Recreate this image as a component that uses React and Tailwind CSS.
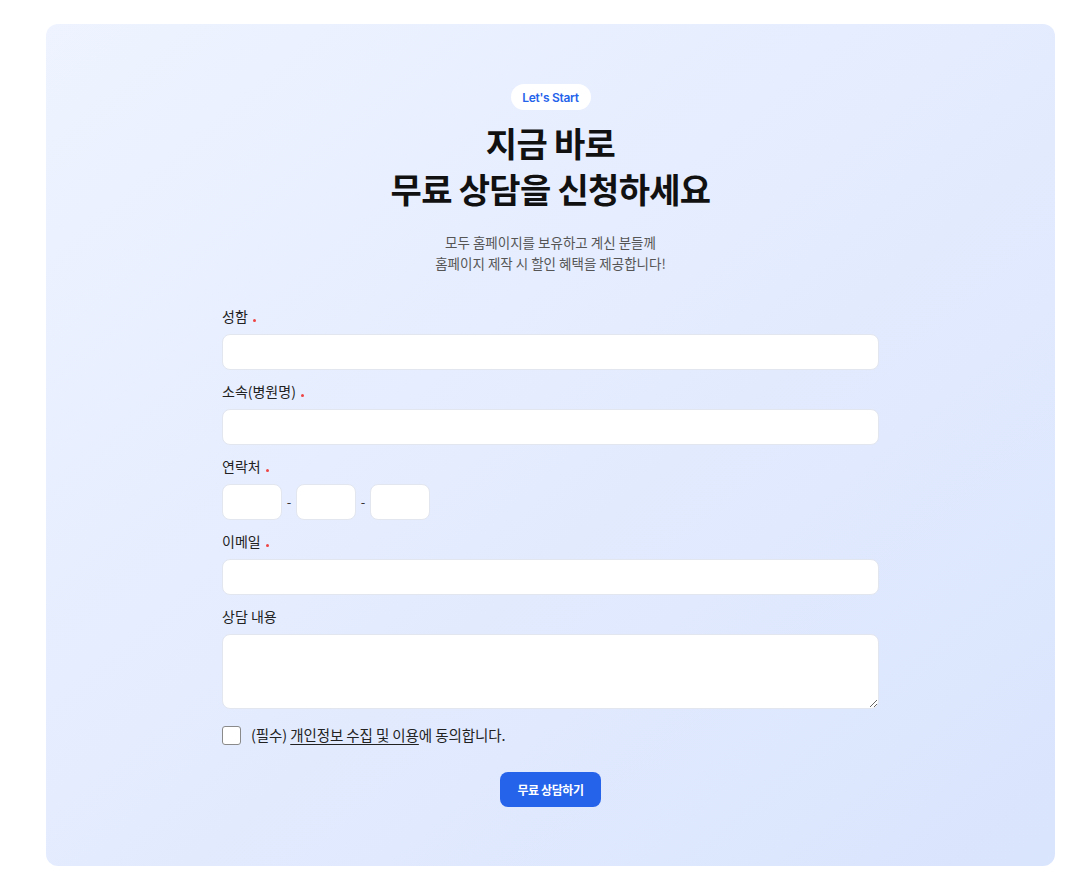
import React from "react";

const font = { fontFamily: '"Noto Sans CJK KR", "Noto Sans", sans-serif' };

function Label({ children, required }) {
  return (
    <div className="flex items-start h-[20px] mb-[5px] text-[14px] leading-[15px] tracking-[0px] text-[#222]">
      <span>{children}</span>
      {required && <span className="ml-[5px] mt-[10px] w-[3px] h-[3px] rounded-full bg-[#ef4444]" />}
    </div>
  );
}

const inputCls =
  "block bg-white border border-[#e2e6ef] rounded-[8px] h-[36px] outline-none";

export default function App() {
  return (
    <div className="min-h-[890px] bg-white pt-[24px] pl-[46px]" style={font}>
      <div className="w-[1009px] h-[842px] rounded-[12px] bg-gradient-to-br from-[#eef3ff] to-[#d9e4fd] flex flex-col items-center pt-[60px]">
        <div className="h-[26px] w-[80px] rounded-full bg-white flex items-center justify-center pt-[1px] text-[12px] font-semibold tracking-[-0.3px] text-[#2563eb]" style={{ fontFamily: 'Inter, "Noto Sans", sans-serif' }}>
          Let's Start
        </div>
        <h1 className="mt-[10px] text-center text-[34px] font-bold leading-[46px] tracking-[-0.7px] text-[#111]">
          지금 바로
          <br />
          무료 상담을 신청하세요
        </h1>
        <p className="mt-[20px] text-center text-[13.5px] leading-[21px] tracking-[0px] text-[#555]">
          모두 홈페이지를 보유하고 계신 분들께
          <br />
          홈페이지 제작 시 할인 혜택을 제공합니다!
        </p>

        <form className="w-[657px] mt-[35px] flex flex-col">
          <Label required>성함</Label>
          <input className={`${inputCls} w-full`} />
          <div className="h-[14px]" />
          <Label required>소속(병원명)</Label>
          <input className={`${inputCls} w-full`} />
          <div className="h-[14px]" />
          <Label required>연락처</Label>
          <div className="flex items-center">
            <input className={`${inputCls} w-[60px]`} />
            <span className="w-[14px] text-center text-[13px] text-[#333]">-</span>
            <input className={`${inputCls} w-[60px]`} />
            <span className="w-[14px] text-center text-[13px] text-[#333]">-</span>
            <input className={`${inputCls} w-[60px]`} />
          </div>
          <div className="h-[14px]" />
          <Label required>이메일</Label>
          <input className={`${inputCls} w-full`} />
          <div className="h-[14px]" />
          <Label>상담 내용</Label>
          <textarea className="block w-full h-[75px] bg-white border border-[#e2e6ef] rounded-[8px] outline-none resize-y" />
          <div className="mt-[17px] flex items-center h-[19px] text-[14.5px] leading-[19px] tracking-[-0.1px] text-[#222]">
            <span className="w-[19px] h-[19px] bg-white border border-[#8a8a8a] rounded-[3px]" />
            <span className="ml-[10px] pb-[3px]">
              (필수) <span className="underline underline-offset-[3px]">개인정보 수집 및 이용</span>에 동의합니다.
            </span>
          </div>
          <div className="flex justify-center mt-[27px]">
            <button type="button" className="w-[101px] h-[35px] rounded-[8px] bg-[#2563eb] text-white text-[12px] font-bold tracking-[-0.4px]">
              무료 상담하기
            </button>
          </div>
        </form>
      </div>
    </div>
  );
}
